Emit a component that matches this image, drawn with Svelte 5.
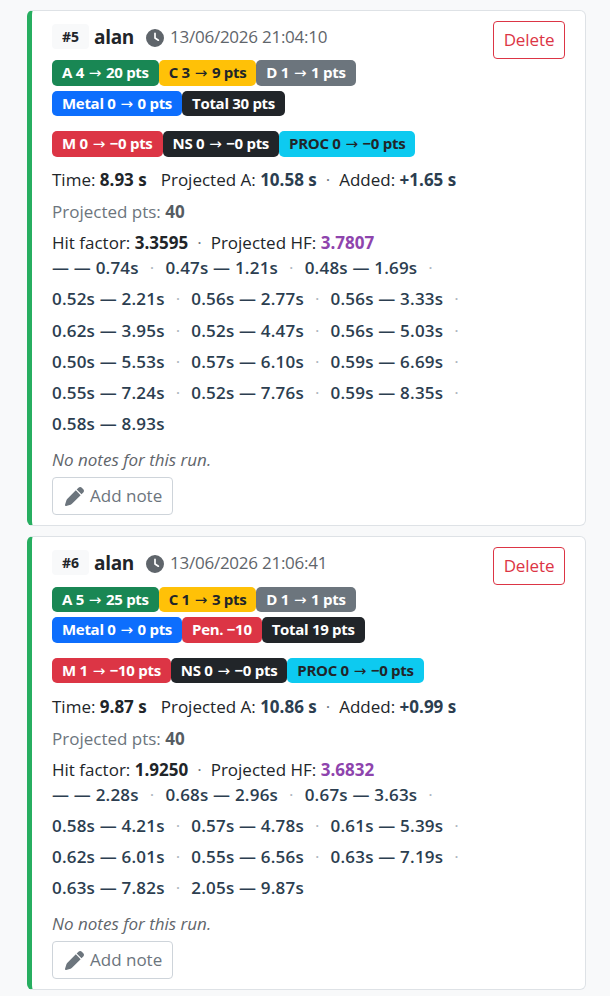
<script>
  const runs = [
    {
      num: 5, shooter: "alan", date: "13/06/2026 21:04:10",
      scores: [
        [["green", "A 4 → 20 pts"], ["yellow", "C 3 → 9 pts"], ["gray", "D 1 → 1 pts"]],
        [["blue", "Metal 0 → 0 pts"], ["dark", "Total 30 pts"]]
      ],
      penalties: [["red", "M 0 → −0 pts"], ["dark", "NS 0 → −0 pts"], ["cyan", "PROC 0 → −0 pts"]],
      time: "8.93 s", projA: "10.58 s", added: "+1.65 s", pts: 40, hf: "3.3595", projHf: "3.7807",
      splits: [
        ["— — 0.74s", "0.47s — 1.21s", "0.48s — 1.69s"],
        ["0.52s — 2.21s", "0.56s — 2.77s", "0.56s — 3.33s"],
        ["0.62s — 3.95s", "0.52s — 4.47s", "0.56s — 5.03s"],
        ["0.50s — 5.53s", "0.57s — 6.10s", "0.59s — 6.69s"],
        ["0.55s — 7.24s", "0.52s — 7.76s", "0.59s — 8.35s"],
        ["0.58s — 8.93s"]
      ]
    },
    {
      num: 6, shooter: "alan", date: "13/06/2026 21:06:41",
      scores: [
        [["green", "A 5 → 25 pts"], ["yellow", "C 1 → 3 pts"], ["gray", "D 1 → 1 pts"]],
        [["blue", "Metal 0 → 0 pts"], ["red", "Pen. −10"], ["dark", "Total 19 pts"]]
      ],
      penalties: [["red", "M 1 → −10 pts"], ["dark", "NS 0 → −0 pts"], ["cyan", "PROC 0 → −0 pts"]],
      time: "9.87 s", projA: "10.86 s", added: "+0.99 s", pts: 40, hf: "1.9250", projHf: "3.6832",
      splits: [
        ["— — 2.28s", "0.68s — 2.96s", "0.67s — 3.63s"],
        ["0.58s — 4.21s", "0.57s — 4.78s", "0.61s — 5.39s"],
        ["0.62s — 6.01s", "0.55s — 6.56s", "0.63s — 7.19s"],
        ["0.63s — 7.82s", "2.05s — 9.87s"]
      ]
    }
  ];
</script>

{#snippet badge(b)}
  <span class="badge {b[0]}">
    {#each b[1].split("→") as part, i}
      {#if i > 0}<span class="arrow">→</span>{/if}{part}
    {/each}
  </span>
{/snippet}

<main>
  {#each runs as run}
    <article class="card">
      <button class="delete">Delete</button>
      <div class="head">
        <span class="num">#{run.num}</span>
        <span class="shooter">{run.shooter}</span>
        <svg class="clock" viewBox="0 0 512 512" aria-hidden="true">
          <path d="M256 0a256 256 0 1 1 0 512A256 256 0 1 1 256 0zM232 120V256c0 8 4 15.500 10.700 20l96 64c11 7.400 25.900 4.400 33.300-6.700s4.400-25.900-6.700-33.300L280 243.200V120c0-13.300-10.700-24-24-24s-24 10.700-24 24z"/>
        </svg>
        <span class="date">{run.date}</span>
      </div>

      <div class="badges">
        {#each run.scores as row}
          <div class="badge-row">
            {#each row as b}
              {@render badge(b)}
            {/each}
          </div>
        {/each}
      </div>

      <div class="badge-row penalties">
        {#each run.penalties as b}
          {@render badge(b)}
        {/each}
      </div>

      <p class="times">
        Time: <b>{run.time}</b><span class="gap"></span>Projected A: <b class="slate">{run.projA}</b><span class="sep">·</span>Added: <b class="slate">{run.added}</b>
      </p>
      <p class="proj-pts">Projected pts: <b>{run.pts}</b></p>
      <p class="hf">
        Hit factor: <b>{run.hf}</b><span class="sep">·</span>Projected HF: <b class="purple">{run.projHf}</b>
      </p>

      <div class="splits">
        {#each run.splits as row, r}
          <div class="split-row">
            {#each row as s, i}
              <span>{s}</span>
              {#if i < row.length - 1 || (r < run.splits.length - 1)}<i class="dot">·</i>{/if}
            {/each}
          </div>
        {/each}
      </div>

      <p class="notes">No notes for this run.</p>
      <button class="add-note">
        <svg viewBox="0 0 512 512" aria-hidden="true">
          <path d="M362.700 19.300 314.300 67.700 444.300 197.700 492.700 149.300c25-25 25-65.500 0-90.500L453.300 19.300c-25-25-65.500-25-90.600 0zM291.700 90.300 58.600 323.500c-10.400 10.400-18 23.300-22.200 37.400L1 481.200c-2.500 8.500-.2 17.600 6 23.800s15.300 8.500 23.700 6.100l120.300-35.400c14.100-4.200 27-11.800 37.400-22.200L421.700 220.300 291.700 90.300z"/>
        </svg>
        <span>Add note</span>
      </button>
    </article>
  {/each}
</main>

<style>
  :global(body) {
    background: #f8f9fa;
    font-family: "Open Sans", "Noto Sans", sans-serif;
    color: #212529;
  }

  main {
    display: flex;
    flex-direction: column;
    gap: 10px;
    padding: 10px 24px 0 27px;
  }

  .card {
    position: relative;
    background: #fff;
    border: 1px solid #dee2e6;
    border-left: 5px solid #27ae60;
    border-radius: 6px;
    padding: 12px 20px 10px 20px;
  }

  p {
    margin: 0;
  }

  .delete {
    position: absolute;
    top: 10px;
    right: 20px;
    width: 72px;
    height: 38px;
    padding: 0 0 2px;
    background: #fff;
    border: 1px solid #dc3545;
    border-radius: 4px;
    color: #dc3545;
    font: 17px "Open Sans", sans-serif;
    letter-spacing: -0.1px;
  }

  .head {
    display: flex;
    align-items: center;
    height: 27px;
    margin-bottom: 10.4px;
  }

  .num {
    width: 37px;
    height: 25px;
    line-height: 25px;
    text-align: center;
    background: #f8f9fa;
    border-radius: 4px;
    font-size: 14px;
    font-weight: 700;
    margin-right: 5px;
  }

  .shooter {
    font-size: 19px;
    font-weight: 700;
    letter-spacing: -0.3px;
    margin-right: 12px;
  }

  .clock {
    width: 18px;
    height: 18px;
    fill: #5f656b;
    margin: 3px 6px 0 0;
  }

  .date {
    font-size: 17px;
    color: #5f656b;
    letter-spacing: -0.25px;
  }

  .badges {
    display: flex;
    flex-direction: column;
    gap: 4.8px;
  }

  .badge-row {
    display: flex;
  }

  .penalties {
    margin-top: 15px;
  }

  .badge {
    height: 25.5px;
    line-height: 25.5px;
    padding: 0 10px;
    border-radius: 5px;
    font-size: 15px;
    font-weight: 700;
    color: #fff;
    white-space: pre;
    letter-spacing: -0.3px;
  }

  .arrow {
    font-family: "DejaVu Sans", sans-serif;
    font-weight: 400;
    margin: 0 1.3px;
  }

  .green { background: #198754; }
  .yellow { background: #ffc107; color: #212529; }
  .gray { background: #6c757d; }
  .blue { background: #0d6efd; }
  .dark { background: #212529; }
  .red { background: #dc3545; }
  .cyan { background: #0dcaf0; color: #212529; }

  .times, .proj-pts, .hf {
    font-size: 17px;
  }

  .times {
    margin-top: 11.5px;
    line-height: 24px;
  }

  .proj-pts {
    margin-top: 8px;
    line-height: 24px;
    color: #6c757d;
  }

  .proj-pts b {
    color: #565c62;
  }

  .hf {
    margin-top: 7px;
    line-height: 24px;
  }

  .slate {
    color: #2c3e50;
  }

  .purple {
    color: #8e44ad;
  }

  .gap {
    display: inline-block;
    width: 14px;
  }

  .sep {
    margin: 0 9px;
    color: #6c757d;
  }

  .splits {
    color: #2c3e50;
    font-size: 17px;
    font-weight: 600;
    letter-spacing: 0.2px;
  }

  .split-row {
    height: 31.2px;
    line-height: 26px;
    display: flex;
    white-space: nowrap;
  }

  .dot {
    font-style: normal;
    font-weight: 400;
    color: #adb5bd;
    margin: 0 11px;
  }

  .notes {
    margin-top: 6px;
    font-size: 17px;
    line-height: 24px;
    font-style: italic;
    color: #5f656b;
  }

  .add-note {
    display: flex;
    align-items: center;
    gap: 6px;
    width: 121px;
    height: 38px;
    margin-top: 5px;
    padding: 0 0 0 12px;
    background: #fff;
    border: 1px solid #ced4da;
    border-radius: 4px;
    color: #6c757d;
    font: 17px "Open Sans", sans-serif;
    white-space: nowrap;
  }

  .add-note span {
    margin-bottom: 2px;
  }

  .add-note svg {
    width: 19px;
    height: 19px;
    fill: #6c757d;
  }
</style>
